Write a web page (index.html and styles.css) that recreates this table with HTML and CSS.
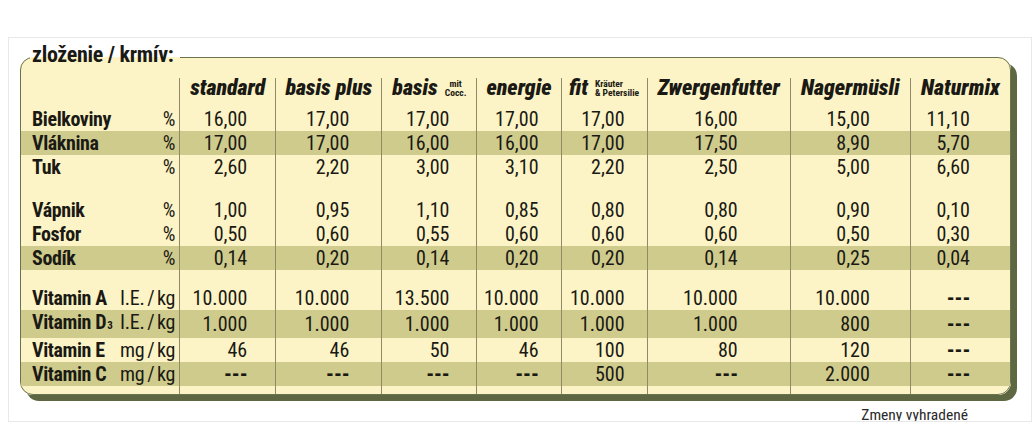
FILE: index.html
```html
<!DOCTYPE html>
<html lang="sk">
<head>
<meta charset="utf-8">
<title>zloženie / krmív</title>
<link rel="stylesheet" href="styles.css">
</head>
<body>
<div class="frame">
  <fieldset class="panel">
    <legend class="title">zloženie / krmív:</legend>
    <table class="grid">
      <colgroup>
        <col class="c-lbl"><col class="c-std"><col class="c-bpl"><col class="c-bas"><col class="c-ene"><col class="c-fit"><col class="c-zwe"><col class="c-nag"><col class="c-nat">
      </colgroup>
      <thead>
        <tr class="head">
          <th></th>
          <th>standard</th>
          <th>basis plus</th>
          <th><span class="hn">basis</span><span class="sup mid"><span>mit</span><span>Cocc.</span></span></th>
          <th>energie</th>
          <th><span class="hn">fit</span><span class="sup"><span>Kräuter</span><span>&amp; Petersilie</span></span></th>
          <th>Zwergenfutter</th>
          <th>Nagermüsli</th>
          <th>Naturmix</th>
        </tr>
      </thead>
      <tbody>
        <tr class="row"><td><div class="lbl"><span>Bielkoviny</span><span class="u">%</span></div></td><td>16,00</td><td>17,00</td><td>17,00</td><td>17,00</td><td>17,00</td><td>16,00</td><td>15,00</td><td>11,10</td></tr>
        <tr class="row band"><td><div class="lbl"><span>Vláknina</span><span class="u">%</span></div></td><td>17,00</td><td>17,00</td><td>16,00</td><td>16,00</td><td>17,00</td><td>17,50</td><td>8,90</td><td>5,70</td></tr>
        <tr class="row"><td><div class="lbl"><span>Tuk</span><span class="u">%</span></div></td><td>2,60</td><td>2,20</td><td>3,00</td><td>3,10</td><td>2,20</td><td>2,50</td><td>5,00</td><td>6,60</td></tr>
        <tr class="gap1"><td></td><td></td><td></td><td></td><td></td><td></td><td></td><td></td><td></td></tr>
        <tr class="row"><td><div class="lbl"><span>Vápnik</span><span class="u">%</span></div></td><td>1,00</td><td>0,95</td><td>1,10</td><td>0,85</td><td>0,80</td><td>0,80</td><td>0,90</td><td>0,10</td></tr>
        <tr class="row"><td><div class="lbl"><span>Fosfor</span><span class="u">%</span></div></td><td>0,50</td><td>0,60</td><td>0,55</td><td>0,60</td><td>0,60</td><td>0,60</td><td>0,50</td><td>0,30</td></tr>
        <tr class="row band"><td><div class="lbl"><span>Sodík</span><span class="u">%</span></div></td><td>0,14</td><td>0,20</td><td>0,14</td><td>0,20</td><td>0,20</td><td>0,14</td><td>0,25</td><td>0,04</td></tr>
        <tr class="gap2"><td></td><td></td><td></td><td></td><td></td><td></td><td></td><td></td><td></td></tr>
        <tr class="row"><td><div class="lbl"><span>Vitamin A</span><span class="u">I.E. / kg</span></div></td><td>10.000</td><td>10.000</td><td>13.500</td><td>10.000</td><td>10.000</td><td>10.000</td><td>10.000</td><td class="na">---</td></tr>
        <tr class="row band"><td><div class="lbl"><span>Vitamin D<span class="sub">3</span></span><span class="u">I.E. / kg</span></div></td><td>1.000</td><td>1.000</td><td>1.000</td><td>1.000</td><td>1.000</td><td>1.000</td><td>800</td><td class="na">---</td></tr>
        <tr class="row"><td><div class="lbl"><span>Vitamin E</span><span class="u">mg / kg</span></div></td><td>46</td><td>46</td><td>50</td><td>46</td><td>100</td><td>80</td><td>120</td><td class="na">---</td></tr>
        <tr class="row band"><td><div class="lbl"><span>Vitamin C</span><span class="u">mg / kg</span></div></td><td class="na">---</td><td class="na">---</td><td class="na">---</td><td class="na">---</td><td>500</td><td class="na">---</td><td>2.000</td><td class="na">---</td></tr>
        <tr class="tail"><td></td><td></td><td></td><td></td><td></td><td></td><td></td><td></td><td></td></tr>
      </tbody>
    </table>
  </fieldset>
  <div class="note">Zmeny vyhradené</div>
</div>
</body>
</html>
```

FILE: styles.css
```css
* { box-sizing: border-box; }

body {
  margin: 0;
  background: #ffffff;
  font-family: "Roboto", "Open Sans", sans-serif;
  font-stretch: 75%;
  color: #1a1914;
}

.frame {
  margin: 37px 0 0 8px;
  width: 1024px;
  height: 385px;
  border: 1px solid #e8e8e8;
  overflow: hidden;
  padding: 0 0 0 11px;
}

.panel {
  margin: 6px 0 0 0;
  padding: 0;
  width: 991px;
  min-width: 0;
  border: 1.5px solid #6a724e;
  border-radius: 13px;
  background: #fcf4c6;
  box-shadow: 6px 6px 0 #5d6842;
}

.title {
  margin-left: 9px;
  padding: 0 6px 4px 2px;
  font-size: 22px;
  font-weight: 700;
  line-height: 22px;
  letter-spacing: -0.3px;
}

.grid {
  width: 100%;
  border-collapse: collapse;
  table-layout: fixed;
  margin-top: 8px;
}

.c-lbl { width: 158.5px; }
.c-std { width: 96px; }
.c-bpl { width: 106px; }
.c-bas { width: 95px; }
.c-ene { width: 84px; }
.c-fit { width: 86px; }
.c-zwe { width: 143px; }
.c-nag { width: 120px; }
.c-nat { width: 99.5px; }

.grid td, .grid th {
  padding: 0;
  border-left: 1px solid #8e8b66;
}
.grid td:first-child, .grid th:first-child { border-left: none; }

.head { height: 29px; }
.head th {
  vertical-align: top;
  font-size: 22px;
  line-height: 20px;
  font-weight: 900;
  font-style: italic;
  text-align: center;
  white-space: nowrap;
}
.hn { margin-right: 7px; }

.sup {
  display: inline-flex;
  flex-direction: column;
  vertical-align: top;
  margin-top: 1px;
  font-size: 9.5px;
  line-height: 9px;
  font-style: normal;
  font-weight: bold;
  text-align: left;
}
.sup.mid { align-items: center; }

.row { height: 24px; }
.row td {
  font-size: 20px;
  line-height: 24px;
  text-align: right;
  white-space: nowrap;
}
.row td.na { font-weight: 900; letter-spacing: -0.6px; }
.band { background: #cfcb8c; }

.gap1 { height: 19px; }
.gap2 { height: 16px; }
.tail { height: 8px; }

.lbl {
  display: flex;
  justify-content: space-between;
  padding: 0 4px 0 11px;
  font-weight: 700;
  letter-spacing: -0.4px;
}
.lbl .u { font-weight: normal; letter-spacing: -0.3px; word-spacing: -1.5px; }
.sub { font-size: 11px; font-weight: bold; margin-left: 1px; }

.row td:nth-child(2) { padding-right: 28px; }
.row td:nth-child(3) { padding-right: 32px; }
.row td:nth-child(4) { padding-right: 27px; }
.row td:nth-child(5) { padding-right: 22px; }
.row td:nth-child(6) { padding-right: 22px; }
.row td:nth-child(7) { padding-right: 52px; }
.row td:nth-child(8) { padding-right: 40px; }
.row td:nth-child(9) { padding-right: 40px; }

.note {
  margin-top: 11px;
  padding-right: 63px;
  text-align: right;
  font-size: 15.5px;
  line-height: 18px;
  color: #2a2a2a;
}
```
